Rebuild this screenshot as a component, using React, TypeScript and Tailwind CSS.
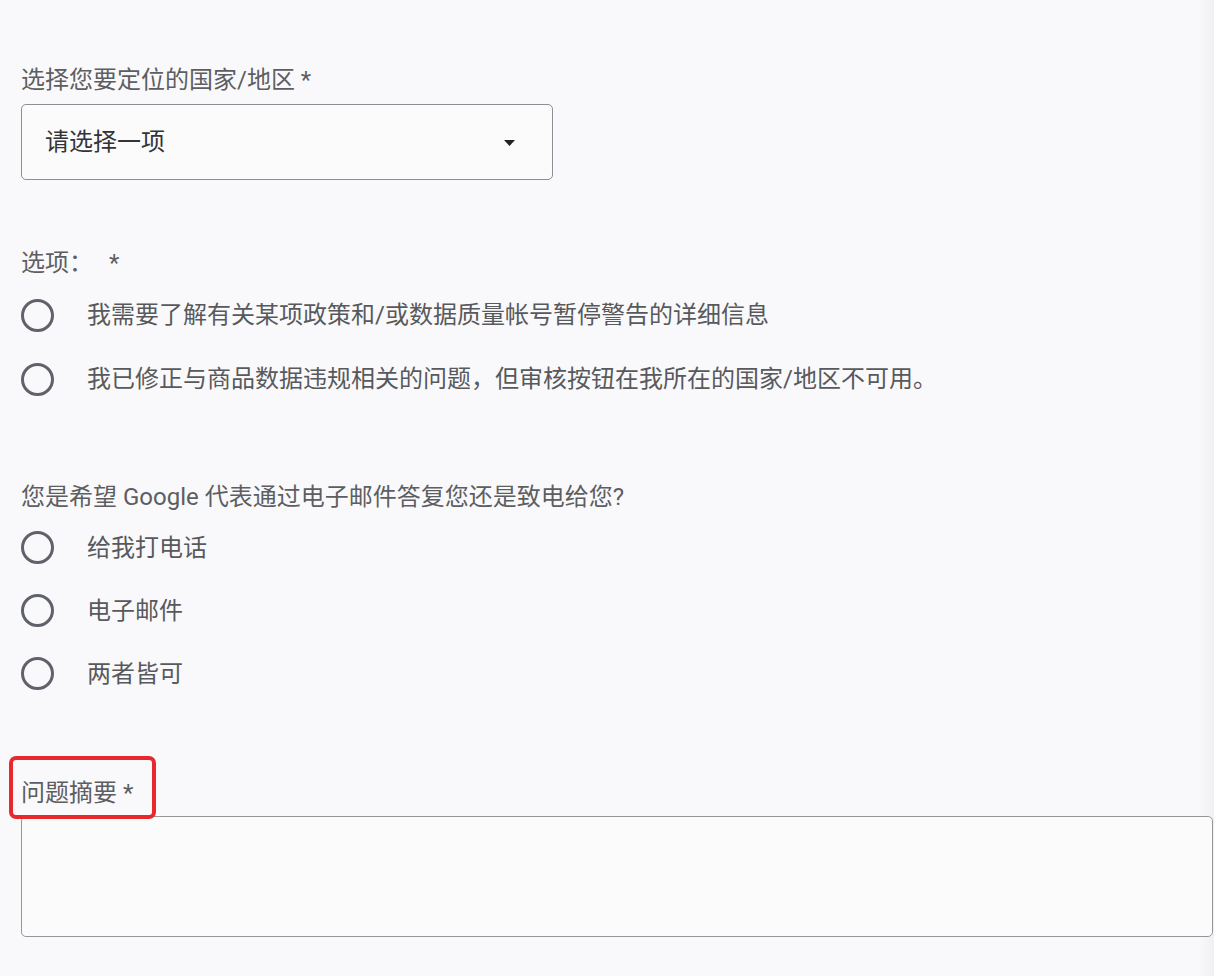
import { useState } from 'react';

const FONT = "font-['Roboto','Noto_Sans_CJK_SC',sans-serif]";

interface RadioRowProps {
  label: string;
  checked: boolean;
  onSelect: () => void;
  rowClass: string;
}

function RadioRow({ label, checked, onSelect, rowClass }: RadioRowProps) {
  return (
    <label className={`flex items-center cursor-pointer ${rowClass}`} onClick={onSelect}>
      <span className="flex h-[33px] w-[33px] shrink-0 items-center justify-center rounded-full border-[3px] border-[#5f626b]">
        {checked && <span className="h-[15px] w-[15px] rounded-full bg-[#5f626b]" />}
      </span>
      <span className="ml-[33px] text-[24px] leading-8 text-[#58595c]">{label}</span>
    </label>
  );
}

const OPTIONS = [
  '我需要了解有关某项政策和/或数据质量帐号暂停警告的详细信息',
  '我已修正与商品数据违规相关的问题，但审核按钮在我所在的国家/地区不可用。',
];

const CONTACT = ['给我打电话', '电子邮件', '两者皆可'];

export default function App() {
  const [option, setOption] = useState<number | null>(null);
  const [contact, setContact] = useState<number | null>(null);

  return (
    <div className={`relative min-h-[976px] w-full overflow-hidden bg-[#f9f9fb] pl-[21px] pt-[64px] ${FONT}`}>
      {/* faint shading on the right edge */}
      <div className="pointer-events-none absolute right-0 top-0 h-full w-[16px] bg-gradient-to-r from-transparent to-[#f0f0f2]" />

      {/* country select */}
      <div className="text-[24px] leading-8 text-[#5d5e61]">选择您要定位的国家/地区 *</div>
      <button className="mt-2 flex h-[76px] w-[532px] items-center justify-between rounded-[5px] border border-[#8e8f93] bg-[#fbfbfc] pl-[23px] pr-[37px] text-left">
        <span className="text-[24px] leading-8 text-[#333438]">请选择一项</span>
        <svg width="11" height="6" viewBox="0 0 11 6" className="mt-[1px]">
          <path d="M0 0h11L5.5 6z" fill="#222" />
        </svg>
      </button>

      {/* options */}
      <div className="mt-[67px] text-[24px] leading-8 text-[#5d5e61]">
        选项：<span className="ml-4">*</span>
      </div>
      <div className="mt-1 flex flex-col">
        {OPTIONS.map((o, i) => (
          <RadioRow
            key={o}
            label={o}
            checked={option === i}
            onSelect={() => setOption(i)}
            rowClass="h-[64px]"
          />
        ))}
      </div>

      {/* contact preference */}
      <div className="mt-[70px] text-[24px] leading-8 text-[#5d5e61]">
        您是希望 Google 代表通过电子邮件答复您还是致电给您?
      </div>
      <div className="mt-[3px] flex flex-col">
        {CONTACT.map((c, i) => (
          <RadioRow
            key={c}
            label={c}
            checked={contact === i}
            onSelect={() => setContact(i)}
            rowClass="h-[63px]"
          />
        ))}
      </div>

      {/* summary */}
      <div className="relative z-20 mt-[72px] w-fit text-[24px] leading-8 text-[#5d5e61]">
        问题摘要 *
        {/* red annotation box */}
        <span className="pointer-events-none absolute -left-[12px] -top-[21px] h-[63px] w-[147px] rounded-[7px] border-[4px] border-[#e8282a]" />
      </div>
      <textarea className="relative z-10 mt-[7px] block h-[121px] w-[1192px] resize-none rounded-[5px] border border-[#95969a] bg-[#fbfbfc] outline-none" />
    </div>
  );
}
